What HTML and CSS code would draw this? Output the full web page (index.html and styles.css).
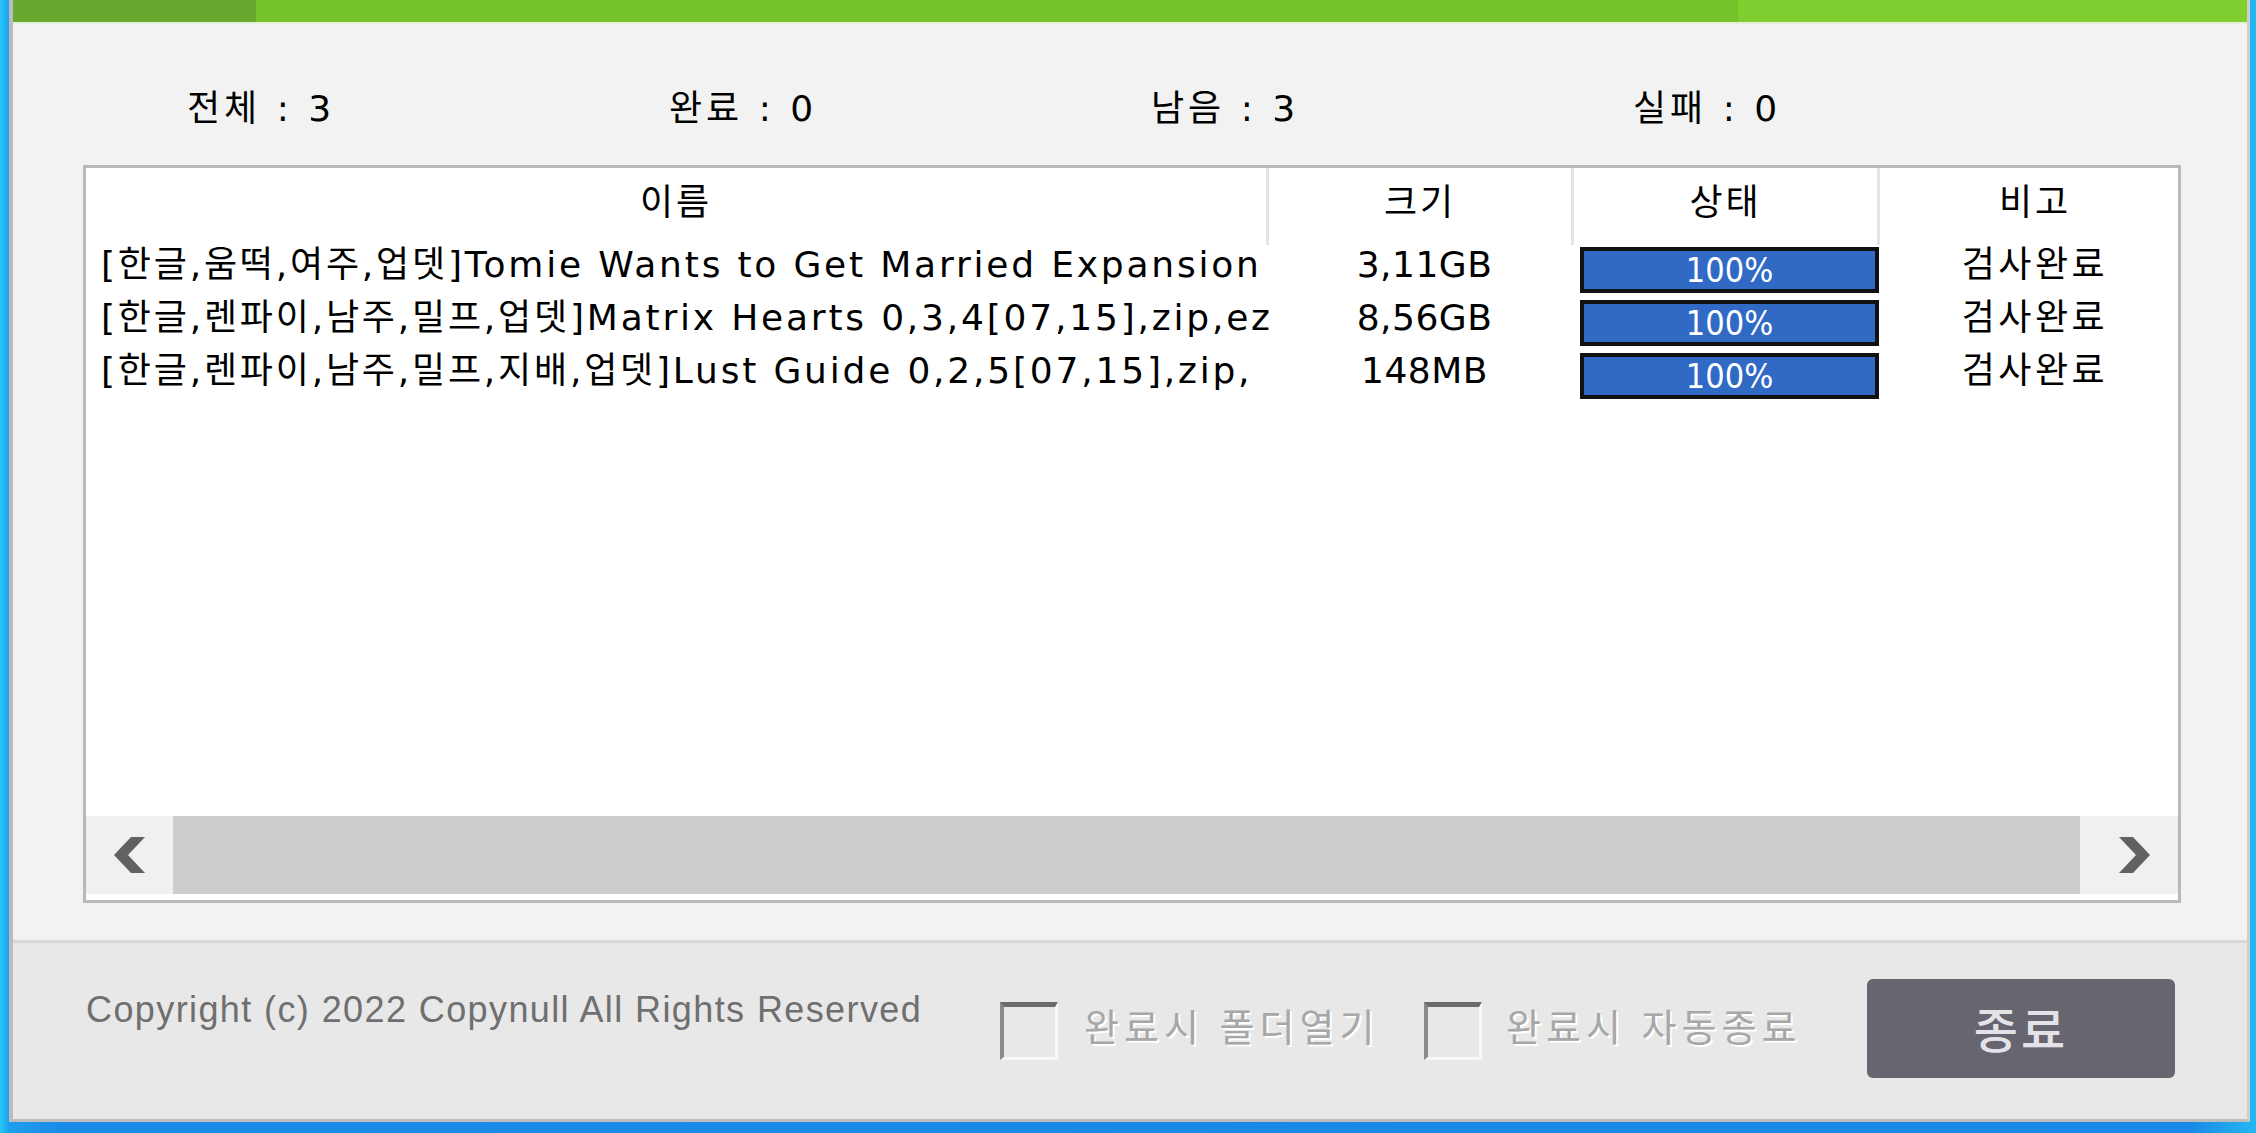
FILE: index.html
```html
<!DOCTYPE html>
<html lang="ko">
<head>
<meta charset="utf-8">
<title>검사</title>
<link rel="stylesheet" href="styles.css">
</head>
<body>
<div class="window">
  <div class="progress-top">
    <div class="seg seg-a"></div>
    <div class="seg seg-b"></div>
    <div class="seg seg-c"></div>
  </div>
  <div class="stats">
    <div class="stat">전체 : 3</div>
    <div class="stat">완료 : 0</div>
    <div class="stat">남음 : 3</div>
    <div class="stat">실패 : 0</div>
  </div>
  <div class="listbox">
    <div class="grid header">
      <div class="hcell">이름</div>
      <div class="hcell">크기</div>
      <div class="hcell">상태</div>
      <div class="hcell last">비고</div>
    </div>
    <div class="rows">
      <div class="grid row">
        <div class="cell name">[한글,움떡,여주,업뎃]Tomie Wants to Get Married Expansion</div>
        <div class="cell size">3,11GB</div>
        <div class="cell status"><div class="bar">100%</div></div>
        <div class="cell note">검사완료</div>
      </div>
      <div class="grid row">
        <div class="cell name">[한글,렌파이,남주,밀프,업뎃]Matrix Hearts 0,3,4[07,15],zip,ez</div>
        <div class="cell size">8,56GB</div>
        <div class="cell status"><div class="bar">100%</div></div>
        <div class="cell note">검사완료</div>
      </div>
      <div class="grid row">
        <div class="cell name">[한글,렌파이,남주,밀프,지배,업뎃]Lust Guide 0,2,5[07,15],zip,</div>
        <div class="cell size">148MB</div>
        <div class="cell status"><div class="bar">100%</div></div>
        <div class="cell note">검사완료</div>
      </div>
    </div>
    <div class="hscroll">
      <div class="sbtn"><svg width="31" height="36" viewBox="0 0 31 36"><polygon points="17,0 31,0 14,18 31,36 17,36 0,18" fill="#616161"/></svg></div>
      <div class="thumb"></div>
      <div class="track"></div>
      <div class="sbtn"><svg width="31" height="36" viewBox="0 0 31 36"><polygon points="0,0 14,0 31,18 14,36 0,36 17,18" fill="#616161"/></svg></div>
    </div>
  </div>
  <div class="footer">
    <div class="copyright">Copyright (c) 2022 Copynull All Rights Reserved</div>
    <label class="opt opt-1"><span class="box"></span><span class="opt-text">완료시 폴더열기</span></label>
    <label class="opt opt-2"><span class="box"></span><span class="opt-text">완료시 자동종료</span></label>
    <button class="close">종료</button>
  </div>
</div>
</body>
</html>
```

FILE: styles.css
```css
* { box-sizing: border-box; }
html, body { margin: 0; padding: 0; }
body {
  width: 2256px;
  height: 1133px;
  overflow: hidden;
  background: linear-gradient(to right, #26c7f8 0, #1d9fed 9px, #1a8be6 60px, #1a88e6 2190px, #24b8f2 2256px);
  font-family: "DejaVu Sans", "Noto Sans CJK KR", sans-serif;
  color: #000;
}
.window {
  margin-left: 9px;
  width: 2241px;
  height: 1122px;
  border-left: 4px solid #bcbcbc;
  border-right: 3px solid #cfcfcf;
  border-bottom: 3px solid #bdbdbd;
  background: #f2f2f2;
  display: flex;
  flex-direction: column;
}
.progress-top {
  height: 24px;
  flex: none;
  display: flex;
  border-bottom: 2px solid #e4efda;
}
.seg-a { width: 243px; background: #68a82f; }
.seg-b { width: 1482px; background: #76c22a; }
.seg-c { flex: 1; background: #80cf30; }

.stats {
  margin-top: 65px;
  height: 40px;
  flex: none;
  display: flex;
  padding-left: 174px;
}
.stat {
  width: 482px;
  font-size: 36px;
  line-height: 40px;
  letter-spacing: 4px;
  white-space: nowrap;
}

.listbox {
  margin: 36px 0 0 70px;
  width: 2098px;
  height: 738px;
  flex: none;
  border: 3px solid #b9b9b9;
  background: #fff;
  display: flex;
  flex-direction: column;
  overflow: hidden;
}
.grid {
  display: grid;
  grid-template-columns: 1183px 305px 306px 310px;
}
.header {
  height: 77px;
  flex: none;
}
.hcell {
  border-right: 3px solid #e4e4e4;
  text-align: center;
  font-size: 36px;
  line-height: 70px;
  letter-spacing: 3px;
}
.hcell.last { border-right: none; }
.rows { flex: 1; }
.row {
  height: 53px;
  align-items: start;
}
.cell {
  font-size: 36px;
  line-height: 40px;
  white-space: nowrap;
  text-align: center;
}
.cell.size { letter-spacing: 0.5px; padding-left: 6px; }
.cell.note { letter-spacing: 3.5px; }
.cell.name {
  text-align: left;
  padding-left: 15px;
  padding-right: 8px;
  overflow: hidden;
  letter-spacing: 2.8px;
}
.cell.status { padding-left: 6px; }
.bar {
  margin-top: 2px;
  width: 299px;
  height: 46px;
  border: 4px solid #111;
  background: #316ac5;
  color: #fff;
  font-family: "DejaVu Sans Condensed", "DejaVu Sans", sans-serif;
  font-stretch: condensed;
  font-size: 34px;
  line-height: 38px;
  text-align: center;
}
.hscroll {
  height: 78px;
  flex: none;
  margin-bottom: 6px;
  display: flex;
  background: #f0f0f0;
}
.sbtn {
  width: 87px;
  display: flex;
  align-items: center;
  justify-content: center;
}
.thumb { width: 1907px; background: #cdcdcd; }
.track { flex: 1; }

.footer {
  margin-top: 37px;
  flex: 1;
  border-top: 3px solid #d8d8d8;
  background: #e8e8e8;
  display: flex;
  align-items: flex-start;
  padding-left: 73px;
}
.copyright {
  margin-top: 45px;
  width: 835px;
  white-space: nowrap;
  font-family: "Liberation Sans", Arial, sans-serif;
  font-size: 36px;
  line-height: 44px;
  letter-spacing: 1.4px;
  color: #6f6f6f;
}
.opt {
  margin-top: 59px;
  display: flex;
  align-items: center;
}
.opt-1 { margin-left: 79px; }
.opt-2 { margin-left: 47px; }
.box {
  width: 58px;
  height: 58px;
  flex: none;
  border-top: 5px solid #6b6b6b;
  border-left: 4px solid #8a8a8a;
  border-right: 3px solid #f8f8f8;
  border-bottom: 3px solid #f8f8f8;
  background: #e9e9e9;
}
.opt-text {
  font-family: "Noto Sans CJK KR", sans-serif;
  font-size: 38px;
  line-height: 44px;
  padding-bottom: 12px;
  letter-spacing: 5px;
  color: #a7a7a7;
  text-shadow: 2px 2px 0 #ffffff;
  white-space: nowrap;
}
.opt-1 .opt-text { margin-left: 26px; width: 293px; }
.opt-2 .opt-text { margin-left: 24px; width: 299px; }
.close {
  margin-left: 62px;
  margin-top: 36px;
  width: 308px;
  height: 99px;
  padding: 0 0 4px 0;
  border: none;
  border-radius: 6px;
  background: #666570;
  color: #e3e3e7;
  font-family: "Noto Sans CJK KR", sans-serif;
  font-weight: 500;
  font-size: 48px;
  letter-spacing: 3px;
}
```
